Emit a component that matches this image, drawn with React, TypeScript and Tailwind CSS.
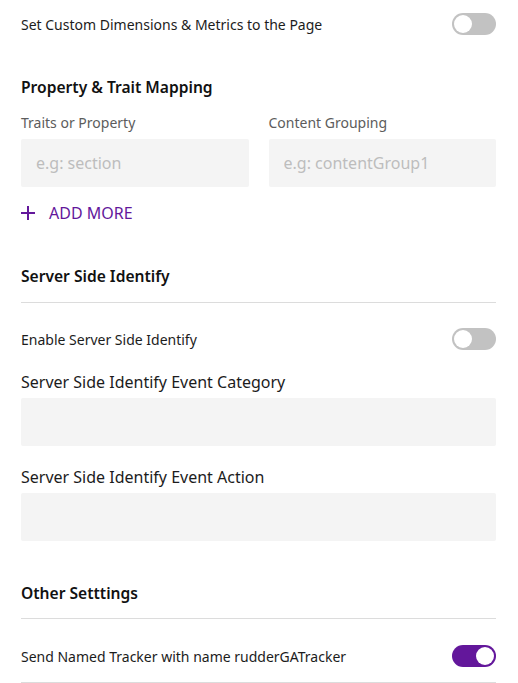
import { useState } from "react";

function Toggle({ on, onChange }: { on: boolean; onChange: () => void }) {
	return (
		<button
			type="button"
			onClick={onChange}
			className={`relative h-[22px] w-[44px] shrink-0 rounded-full ${
				on ? "bg-[#63179b]" : "bg-[#c2c2c2]"
			}`}
		>
			<span
				className={`absolute top-[2px] h-[18px] w-[18px] rounded-full bg-white ${
					on ? "left-[24px]" : "left-[2px]"
				}`}
			/>
		</button>
	);
}

function ToggleRow({
	label,
	on,
	onChange,
}: {
	label: string;
	on: boolean;
	onChange: () => void;
}) {
	return (
		<div className="flex h-[22px] items-center justify-between">
			<div className="text-[14px] text-[#1c1c1c]">{label}</div>
			<Toggle on={on} onChange={onChange} />
		</div>
	);
}

function SectionTitle({ children }: { children: string }) {
	return (
		<div className="text-[15.6px] leading-[24px] font-semibold text-[#111]">
			{children}
		</div>
	);
}

function TextInput({ placeholder }: { placeholder?: string }) {
	return (
		<input
			placeholder={placeholder}
			className="h-[48px] w-full rounded-[2px] bg-[#f4f4f4] px-[15px] text-[16px] text-[#222] outline-none placeholder:text-[#bdbdbd]"
		/>
	);
}

export default function App() {
	const [customDims, setCustomDims] = useState(false);
	const [serverIdentify, setServerIdentify] = useState(false);
	const [namedTracker, setNamedTracker] = useState(true);

	return (
		<div
			className="bg-white pl-[21px] pr-[22px] pt-[13px] pb-[1px]"
			style={{ fontFamily: '"Noto Sans", sans-serif' }}
		>
			<ToggleRow
				label="Set Custom Dimensions & Metrics to the Page"
				on={customDims}
				onChange={() => setCustomDims(!customDims)}
			/>

			<div className="mt-[40px]">
				<SectionTitle>Property &amp; Trait Mapping</SectionTitle>
			</div>
			<div className="mt-[14px] grid grid-cols-2 gap-x-[20px]">
				<div className="flex flex-col gap-[6px]">
					<div className="text-[14px] leading-[20px] text-[#5c5c5c]">
						Traits or Property
					</div>
					<TextInput placeholder="e.g: section" />
				</div>
				<div className="flex flex-col gap-[6px]">
					<div className="text-[14px] leading-[20px] text-[#5c5c5c]">
						Content Grouping
					</div>
					<TextInput placeholder="e.g: contentGroup1" />
				</div>
			</div>
			<button
				type="button"
				className="mt-[16px] flex h-[20px] items-center gap-[14px] text-[16px] text-[#63179b]"
			>
				<svg width="14" height="14" viewBox="0 0 14 14">
					<path d="M7 0v14M0 7h14" stroke="currentColor" strokeWidth="2" />
				</svg>
				ADD MORE
			</button>

			<div className="mt-[41px]">
				<SectionTitle>Server Side Identify</SectionTitle>
			</div>
			<div className="mt-[14px] h-px bg-[#dcdcdc]" />
			<div className="mt-[25px]">
				<ToggleRow
					label="Enable Server Side Identify"
					on={serverIdentify}
					onChange={() => setServerIdentify(!serverIdentify)}
				/>
			</div>
			<div className="mt-[20px] flex flex-col gap-[4px]">
				<div className="text-[16px] leading-[24px] text-[#1c1c1c]">
					Server Side Identify Event Category
				</div>
				<TextInput />
			</div>
			<div className="mt-[19px] flex flex-col gap-[4px]">
				<div className="text-[16px] leading-[24px] text-[#1c1c1c]">
					Server Side Identify Event Action
				</div>
				<TextInput />
			</div>

			<div className="mt-[40px]">
				<SectionTitle>Other Setttings</SectionTitle>
			</div>
			<div className="mt-[13px] h-px bg-[#dcdcdc]" />
			<div className="mt-[26px]">
				<ToggleRow
					label="Send Named Tracker with name rudderGATracker"
					on={namedTracker}
					onChange={() => setNamedTracker(!namedTracker)}
				/>
			</div>
			<div className="mt-[15px] h-px bg-[#dcdcdc]" />
		</div>
	);
}
